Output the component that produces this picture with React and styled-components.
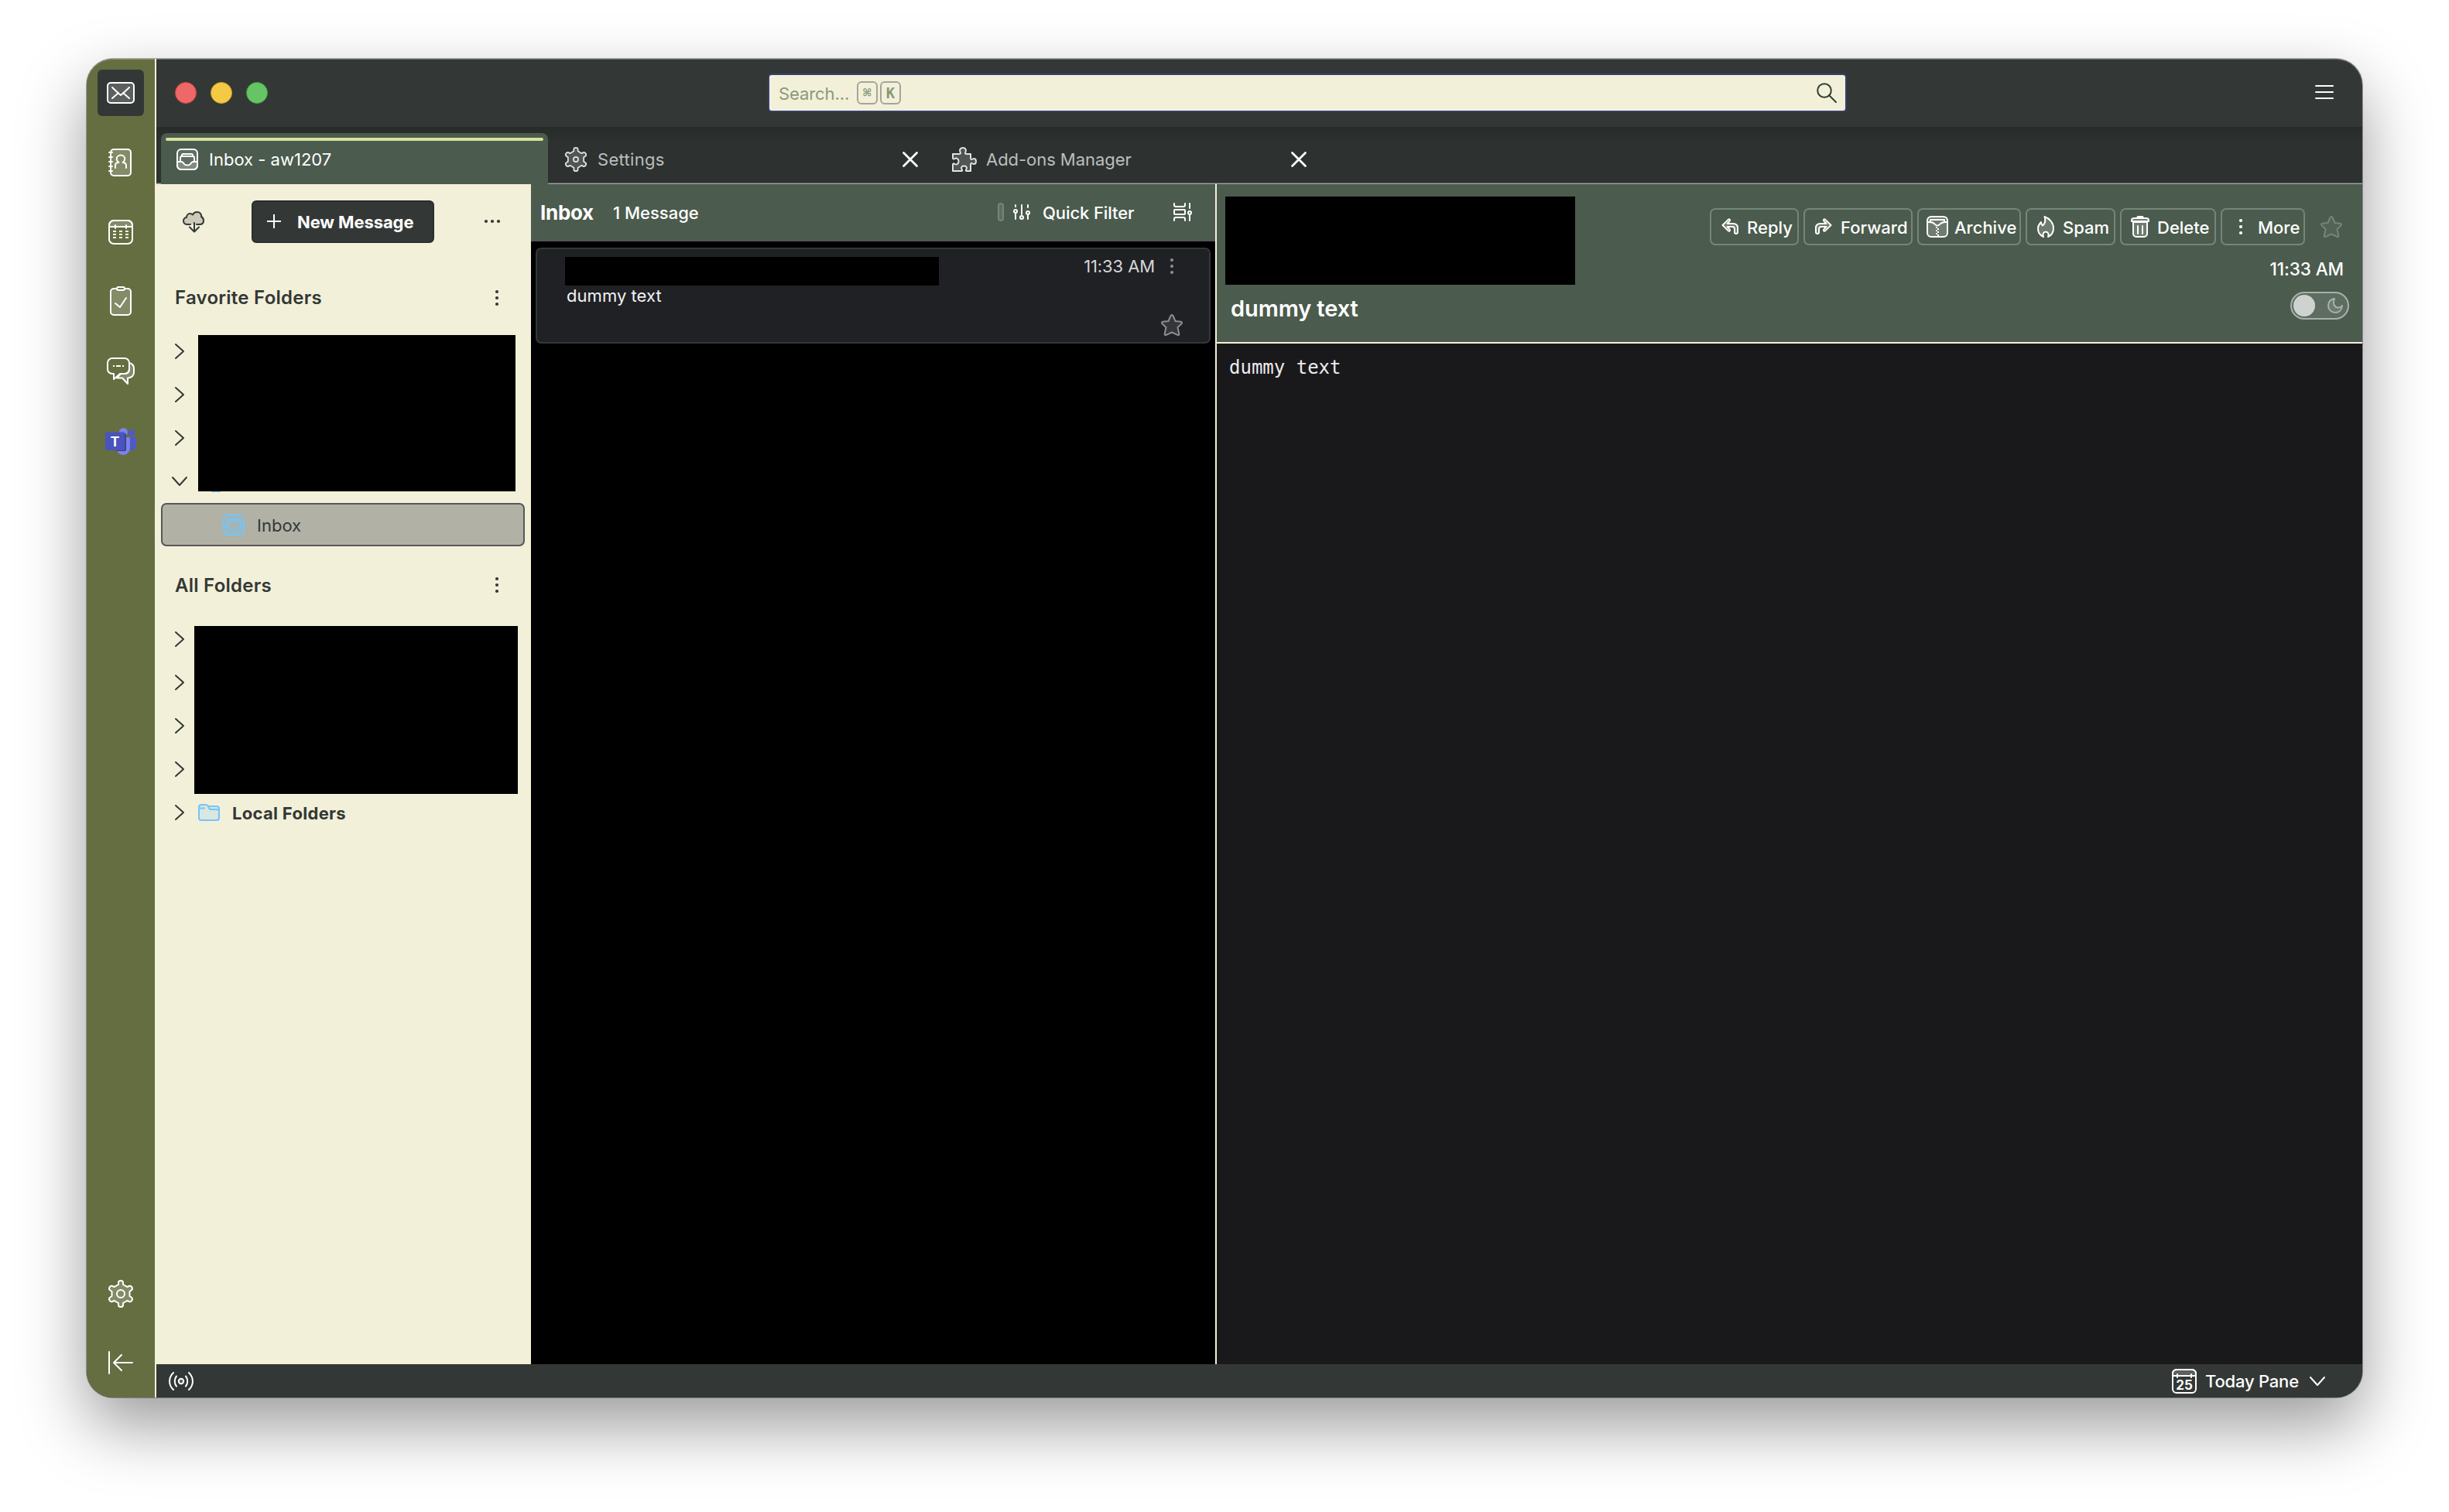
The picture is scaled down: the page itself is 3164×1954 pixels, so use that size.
import React from 'react';
import styled, { createGlobalStyle, ThemeProvider } from 'styled-components';

const theme = {
  colors: {
    chrome: '#333836',
    strip: '#2d3231',
    green: '#4b5b4d',
    olive: '#656e41',
    cream: '#f3f0d9',
    lime: '#d6e29e',
    blue: '#74c5f9',
    body: '#19191b'
  },
  font: 'Inter, "Liberation Sans", sans-serif'
};

const GlobalStyle = createGlobalStyle`
  body {
    margin: 0;
    background: #fff;
    overflow: hidden;
  }
`;

/* --- WINDOW --- */
const AppWindow = styled.div`
  position: relative; // anchor for the edge highlight
  box-sizing: border-box;
  display: flex;
  width: 2940px;
  height: 1730px;
  margin: 76px 112px 148px;
  overflow: hidden;
  border-radius: 34px;
  background: ${p => p.theme.colors.chrome};
  color: #fff;
  font-family: ${p => p.theme.font};
  font-size: 22px;
  line-height: 1.2;
  white-space: nowrap;

  &::after {
    content: '';
    position: absolute;
    inset: 0;
    border-radius: 34px;
    box-shadow: inset 0 1px 0 rgba(255, 255, 255, 0.28);
    pointer-events: none;
  }
`;

const Shadow = styled.div`
  display: flow-root;

  & > ${AppWindow} {
    box-shadow: 0 0 0 1px rgba(0, 0, 0, 0.3), 0 36px 86px rgba(0, 0, 0, 0.4);
  }
`;

const Main = styled.div`
  display: flex;
  flex: 1;
  flex-direction: column;
  min-width: 0;
`;

/* --- SPACES BAR --- */
const Spaces = styled.nav`
  box-sizing: border-box;
  display: flex;
  flex-direction: column;
  align-items: center;
  gap: 30px;
  width: 90px;
  padding: 14px 0;
  border-right: 2px solid ${p => p.theme.colors.cream};
  background: ${p => p.theme.colors.olive};
`;

const SpaceButton = styled.button`
  display: flex;
  align-items: center;
  justify-content: center;
  width: 60px;
  height: 60px;
  padding: 0;
  border: none;
  border-radius: 6px;
  background: ${p => (p.$active ? p.theme.colors.chrome : 'transparent')};
  color: #fff;
`;

const Spacer = styled.div`
  flex: 1;
`;

/* --- ICONS --- */
const Svg = styled.svg`
  display: block;
  flex: none;
  overflow: visible;
  fill: none;
  stroke: currentColor;
  stroke-width: 2;
  stroke-linecap: round;
  stroke-linejoin: round;
`;

const IconSlot = styled.span`
  display: flex;
  flex: none;
  align-items: center;
  justify-content: center;
  width: ${p => p.$w || 32}px;
  color: ${p => p.$color || 'inherit'};
`;

const tint = { fill: 'currentColor', fillOpacity: 0.2 };
const solid = { fill: 'currentColor', stroke: 'none' };

const MailIcon = () => (
  <Svg width="36" height="28" viewBox="0 0 36 28">
    <rect x="1" y="1" width="34" height="26" rx="4" {...tint} />
    <path d="M7 7l8 7.500 3 2.500 3-2.500L29 7M7 21l8-7M29 21l-8-7" />
  </Svg>
);

const AddressBookIcon = () => (
  <Svg width="32" height="36" viewBox="0 0 32 36">
    <rect x="3" y="1" width="26" height="34" rx="4" {...tint} />
    <path d="M1 5h4M1 11h4M1 17h4M1 23h4M1 29h4" />
    <path d="M9 25v-3c0-2.500 1.500-4 4.500-4-2.200-1.500-2.800-3-2.800-4.500 0-3 2.200-5 5.300-5s5.300 2 5.300 5c0 1.500-.6 3-2.800 4.500 3 0 4.500 1.500 4.500 4v3" />
  </Svg>
);

const CalendarIcon = () => (
  <Svg width="32" height="32" viewBox="0 0 32 32">
    <path d="M1 9V7a6 6 0 0 1 6-6h18a6 6 0 0 1 6 6v2z" {...tint} />
    <rect x="1" y="1" width="30" height="30" rx="6" />
    <path d="M9 7v4M23 7v4" />
    <path
      d="M6 15h4M14 15h4M22 15h4M6 19h4M14 19h4M22 19h4M6 23h4M14 23h4M22 23h4"
      strokeLinecap="butt"
    />
  </Svg>
);

const TasksIcon = () => (
  <Svg width="28" height="40" viewBox="0 0 28 40">
    <path
      d="M9 3H5a4 4 0 0 0-4 4v26a4 4 0 0 0 4 4h18a4 4 0 0 0 4-4V7a4 4 0 0 0-4-4h-4"
      {...tint}
    />
    <rect x="9" y="1" width="10" height="4" rx="2" />
    <path d="M7 22l6 5 8-12" />
  </Svg>
);

const ChatIcon = () => (
  <Svg width="36" height="36" viewBox="0 0 36 36">
    <path
      d="M29 7c4 1 6 3.500 6 7v5c0 4-2 7-8 7.500V34l-7-7.500h-7L18 21h5c4 0 6-2 6-6z"
      {...tint}
    />
    <path d="M7 1h16a6 6 0 0 1 6 6v8a6 6 0 0 1-6 6h-6l-8 7v-7H7a6 6 0 0 1-6-6V7a6 6 0 0 1 6-6z" />
    <path d="M8 11h2M12 11h6M20 11h2" strokeLinecap="butt" />
  </Svg>
);

const TeamsIcon = () => (
  <Svg width="40" height="34" viewBox="0 0 40 34">
    <g stroke="none">
      <circle cx="34" cy="6.500" r="4.200" fill="#5059c9" />
      <path d="M28 12h10.500a1.500 1.500 0 0 1 1.500 1.500V23a6 6 0 0 1-12 0z" fill="#5059c9" />
      <circle cx="23.500" cy="5.500" r="5.500" fill="#7b83eb" />
      <path d="M14 12h16.500a1.500 1.500 0 0 1 1.500 1.500V26a9 9 0 0 1-18 0z" fill="#7b83eb" />
      <path d="M14 7h11a2 2 0 0 1 2 2v19a2 2 0 0 1-2 2H14z" fill="#3a3f7c" />
      <rect y="5.500" width="25.500" height="23.500" rx="2" fill="#4b53bc" />
      <text
        x="12.500"
        y="23.500"
        textAnchor="middle"
        fontSize="18"
        fontWeight="700"
        fill="#fff"
      >
        T
      </text>
    </g>
  </Svg>
);

const GearIcon = ({ width = 34, height = 36, hole = 5 }) => (
  <Svg
    width={width}
    height={height}
    viewBox="0 0 34 36"
    preserveAspectRatio="none"
  >
    <path
      d="M14 6V3.500Q14 1 17 1t3 2.500V6l5.500 3.200 2.200-1.200q2.200-1 3.800 1.500 1.300 2.700-.8 4L28.500 15v6l2.200 1.500q2.100 1.300.8 4-1.600 2.500-3.800 1.500l-2.200-1.200L20 30v2.500q0 2.500-3 2.500t-3-2.500V30l-5.500-3.200L6.300 28q-2.200 1-3.800-1.500-1.300-2.700.8-4L5.500 21v-6l-2.200-1.500q-2.100-1.300-.8-4Q4.100 7 6.300 8l2.200 1.200z"
      {...tint}
    />
    <circle cx="17" cy="18" r={hole} />
  </Svg>
);

const CollapseIcon = () => (
  <Svg width="32" height="32" viewBox="0 0 32 32">
    <path d="M1 1v28M31 15H7M17 5L7 15l10 10" />
  </Svg>
);

const InboxIcon = () => (
  <Svg width="28" height="28" viewBox="0 0 28 28">
    <path
      d="M1 17h5c1.500 0 3 1 4 3 1.500 2 6.500 2 8 0 1-2 2.500-3 4-3h5v5a5 5 0 0 1-5 5H6a5 5 0 0 1-5-5z"
      {...tint}
    />
    <rect x="1" y="1" width="26" height="26" rx="5" {...tint} fillOpacity="0.12" />
    <path d="M5 16v-4a2 2 0 0 1 2-2h14a2 2 0 0 1 2 2v4M7 10V8.500A1.500 1.500 0 0 1 8.500 7h11A1.500 1.500 0 0 1 21 8.500V10" />
  </Svg>
);

const PuzzleIcon = () => (
  <Svg width="32" height="32" viewBox="0 0 32 32">
    <path
      d="M1 9h8c2 0 2.500-1 1.500-2.500C9 3.500 11 1 14 1s5 2.500 3.500 5.500C16.500 8 17 9 19 9h5v5c0 2 1 2.500 2.500 1.500 2.500-1.500 4.500 0 4.500 3s-2 4.500-4.500 3c-1.500-1-2.500-.5-2.500 1.500v8h-5c-1.500 0-1.500-1-.5-2.500C20 26 18 24.500 15.500 24.500s-4.500 1.500-3 4c1 1.500 1 2.500-.5 2.500H1v-8c0-2 1-2 2.500-1 2.500 1.500 5-.5 5-3.500s-2.500-5-5-3.500C2 16 1 15.500 1 14z"
      {...tint}
    />
  </Svg>
);

const CloseIcon = () => (
  <Svg width="20" height="20" viewBox="0 0 20 20">
    <path d="M1.500 1.500l17 17M18.500 1.500l-17 17" style={{ strokeWidth: 2.8 }} />
  </Svg>
);

const SearchIcon = () => (
  <Svg width="26" height="26" viewBox="0 0 26 26">
    <circle cx="10" cy="10" r="8.800" />
    <path d="M16 16l9 9" />
  </Svg>
);

const MenuIcon = () => (
  <Svg width="24" height="20" viewBox="0 0 24 20">
    <path d="M1 1h22M1 9h22M1 17h22" />
  </Svg>
);

const CloudIcon = () => (
  <Svg width="28" height="28" viewBox="0 0 28 28">
    <path
      d="M10 17H6c-3 0-5-2-5-4.500C1 9.500 3 8 5 8c0-3 2-5 4.500-5 1.500 0 2.500.5 3.500 1.500C14 2.500 16 1 18.500 1 22 1 24.500 3.500 24 7c2 1 3 2.800 3 5 0 3-2 5-5 5h-4"
      {...tint}
    />
    <path d="M15 15v11M9 20.500l6 6 6-6" />
  </Svg>
);

const PlusIcon = () => (
  <Svg width="18" height="20" viewBox="0 0 18 20">
    <path d="M9 0v18M0 9h18" strokeLinecap="butt" />
  </Svg>
);

const DotsIcon = ({ vertical }) => (
  <Svg
    width={vertical ? 4 : 20}
    height={vertical ? 20 : 6}
    viewBox={vertical ? '0 0 4 20' : '0 0 20 6'}
  >
    {[2, 10, 18].map(n => (
      <circle
        key={n}
        cx={vertical ? 2 : n}
        cy={vertical ? n : 2}
        r="2.100"
        {...solid}
      />
    ))}
  </Svg>
);

const ChevronIcon = ({ down }) =>
  down ? (
    <Svg width="20" height="12" viewBox="0 0 20 12">
      <path d="M1 1l9 10 9-10" />
    </Svg>
  ) : (
    <Svg width="12" height="20" viewBox="0 0 12 20">
      <path d="M1 1l10 9-10 9" />
    </Svg>
  );

const FolderIcon = () => (
  <Svg width="28" height="22" viewBox="0 0 28 22">
    <path
      d="M1 4a3 3 0 0 1 3-3h6c1.500 0 2.500 1 3 2h11a3 3 0 0 1 3 3v12a3 3 0 0 1-3 3H4a3 3 0 0 1-3-3z"
      {...tint}
    />
    <path d="M1 5.500h7M13 3c.5 2 1 4 3 4h8a3 3 0 0 1 3 2" />
  </Svg>
);

const AccountIcon = () => (
  <Svg width="28" height="28" viewBox="0 0 28 28">
    <path d="M1 10h26M18 27h10" />
  </Svg>
);

const SlidersIcon = () => (
  <Svg width="22" height="20" viewBox="0 0 22 20">
    <path d="M3 1v2M3 12v7M11 1v12M19 1v3M19 14v5" />
    <circle cx="3" cy="9" r="2" />
    <circle cx="11" cy="17" r="2" />
    <circle cx="19" cy="11" r="2" />
  </Svg>
);

const DisplayIcon = () => (
  <Svg width="24" height="24" viewBox="0 0 24 24">
    <path d="M1 1v2a2 2 0 0 0 2 2h10a2 2 0 0 0 2-2V1M1 23v-2a2 2 0 0 1 2-2h10a2 2 0 0 1 2 2v2" />
    <rect x="1" y="9" width="14" height="6" rx="1" />
    <path d="M21 1v6M21 16v7" />
    <circle cx="21" cy="13" r="2" />
  </Svg>
);

const StarIcon = () => (
  <Svg width="28" height="28" viewBox="0 0 28 28">
    <path
      d="M14 1c.8 0 1.300.6 1.700 1.500L18.500 9l7 .8c1.600.2 2 1.500.9 2.600L21.500 17l1.800 8.500c.2 1.300-.8 1.900-1.900 1.300L14 23.500l-7.400 3.300c-1.100.6-2.100 0-1.900-1.300L6.500 17l-4.900-4.600c-1.100-1.100-.7-2.400.9-2.600l7-.8 2.800-6.500C12.700 1.600 13.200 1 14 1z"
      {...tint}
    />
  </Svg>
);

const ReplyIcon = ({ flip }) => (
  <Svg
    width="22"
    height="22"
    viewBox="0 0 22 22"
    transform={flip ? 'scale(-1 1)' : undefined}
  >
    <path
      d="M1.500 9L9 1.600c1-1 2.800.4 1.800 1.700L7.500 7H15c4 0 6 2 6 5.500V18c0 2.500-4 2.500-4 0v-4c0-2-1-3-3-3H7.500l3.300 3.700c1 1.300-.8 2.700-1.800 1.700z"
      {...tint}
    />
  </Svg>
);

const ArchiveIcon = () => (
  <Svg width="28" height="28" viewBox="0 0 28 28">
    <rect x="1" y="1" width="26" height="26" rx="5" {...tint} />
    <path d="M1 8h3c3 0 5 .5 7 3 1.500 2 4.500 2 6 0 2-2.500 4-3 7-3h3M5 7V5h18v2" />
    <path d="M13 14v12" strokeDasharray="2 2" strokeLinecap="butt" />
    <path
      d="M15 14v12"
      strokeDasharray="2 2"
      strokeDashoffset="2"
      strokeLinecap="butt"
    />
  </Svg>
);

const SpamIcon = () => (
  <Svg width="22" height="28" viewBox="0 0 22 28">
    <path
      d="M8 27c-4.500-2-7-5.500-7-10.500C1 13 2.500 10.500 5 8c0 2 .6 3.500 2 4.500C10 10 11 5.500 9.500 1c7 2.500 11.500 8.500 11.500 15 0 5-2 9-7 11 1-2.500 1-6-3-6.500-4 .5-4 4-3 6.500z"
      {...tint}
    />
  </Svg>
);

const TrashIcon = () => (
  <Svg width="24" height="28" viewBox="0 0 24 28">
    <path d="M3 8h18v15a4 4 0 0 1-4 4H7a4 4 0 0 1-4-4z" {...tint} />
    <path d="M1 7V6a3 3 0 0 1 3-3h16a3 3 0 0 1 3 3v1z" {...tint} />
    <path d="M9 1.500h6" style={{ strokeWidth: 3 }} />
    <path d="M9 13v10M15 13v10" />
  </Svg>
);

const MoonIcon = () => (
  <Svg width="20" height="20" viewBox="0 0 20 20">
    <path
      d="M9 1C4 1.500 1 5.500 1 10c0 5 4 9 9 9 4.500 0 8.500-3 9-9-1.500 2-3 2.500-5 2.500-4.500 0-8-5-5-11.500z"
      {...tint}
    />
  </Svg>
);

const BroadcastIcon = () => (
  <Svg width="32" height="24" viewBox="0 0 32 24">
    <circle cx="16" cy="12" r="3.200" {...tint} />
    <path d="M10 5.500c-3 3.500-3 9.500 0 13M22 5.500c3 3.500 3 9.500 0 13M6 1c-6.600 6-6.600 16 0 22M26 1c6.600 6 6.600 16 0 22" />
  </Svg>
);

const TodayIcon = () => (
  <Svg width="32" height="32" viewBox="0 0 32 32">
    <path d="M1 9V6a5 5 0 0 1 5-5h20a5 5 0 0 1 5 5v3z" {...tint} />
    <rect x="1" y="1" width="30" height="30" rx="5" />
    <path d="M7 7v4M25 7v4" />
    <text
      x="16"
      y="26.500"
      textAnchor="middle"
      fontSize="17"
      fontWeight="700"
      {...solid}
    >
      25
    </text>
  </Svg>
);

/* --- TITLE BAR & TABS --- */
const TitleBar = styled.header`
  box-sizing: border-box;
  display: flex;
  align-items: center;
  height: 88px;
  padding: 0 37px 0 24px;
`;

const TrafficLight = styled.span`
  box-sizing: border-box;
  width: 28px;
  height: 28px;
  margin-right: 18px;
  border: 1px solid ${p => p.$edge};
  border-radius: 50%;
  background: ${p => p.$color};
`;

const SearchBar = styled.div`
  box-sizing: border-box;
  display: flex;
  align-items: center;
  width: 1394px;
  height: 50px;
  margin: 0 605px 0 628px;
  padding: 0 11px 0 12px;
  border: 2px solid #34406f;
  border-radius: 5px;
  background: ${p => p.theme.colors.cream};
  color: #8a9a7c;
`;

const Placeholder = styled.span`
  width: 101px;
  padding-top: 3px;
  letter-spacing: -0.1px;
`;

const Key = styled.kbd`
  box-sizing: border-box;
  width: 27px;
  height: 30px;
  margin-right: 3px;
  border: 2px solid #a5a49c;
  border-radius: 6px;
  font: 700 ${p => p.$size || 19}px / 26px "DejaVu Sans Mono", monospace;
  text-align: center;
`;

const TabStrip = styled.div`
  box-sizing: border-box;
  display: flex;
  gap: 2px;
  height: 74px;
  padding: 8px 6px 0;
  background: linear-gradient(#272b2a, ${p => p.theme.colors.strip} 20px);
  box-shadow: inset 0 -1px #a5a7a6, inset 0 -2px #58595c;
`;

const TabBox = styled.div`
  position: relative; // anchor for the selection line
  box-sizing: border-box;
  display: flex;
  align-items: center;
  gap: 12px;
  width: 500px;
  height: 66px;
  padding: 2px 24px 0 18px;
  border-radius: 8px 8px 0 0;
  background: ${p => (p.$active ? p.theme.colors.green : 'transparent')};
  color: ${p => (p.$active ? '#fff' : '#bcbebd')};

  &::before {
    content: '';
    display: ${p => (p.$active ? 'block' : 'none')};
    position: absolute;
    top: 6px;
    left: 6px;
    right: 6px;
    height: 4px;
    border-radius: 2px;
    background: ${p => p.theme.colors.lime};
  }
`;

const Label = styled.span`
  letter-spacing: ${p => p.$spacing || 0}px;
`;

const Tab = ({ icon, label, active, spacing }) => (
  <TabBox $active={active}>
    <IconSlot $color={active ? '#fff' : '#e2e3e2'}>{icon}</IconSlot>
    <Label $spacing={spacing}>{label}</Label>
    <Spacer />
    {!active && (
      <IconSlot $w={20} $color="#fff">
        <CloseIcon />
      </IconSlot>
    )}
  </TabBox>
);

/* --- PANES --- */
const Panes = styled.div`
  display: flex;
  flex: 1;
  min-height: 0;
`;

const FolderPane = styled.aside`
  width: 484px;
  background: ${p => p.theme.colors.cream};
  color: ${p => p.theme.colors.chrome};
`;

const FolderToolbar = styled.div`
  box-sizing: border-box;
  display: flex;
  align-items: center;
  height: 97px;
  padding: 0 40px 0 34px;
`;

const NewMessage = styled.button`
  box-sizing: border-box;
  display: flex;
  align-items: center;
  gap: 21px;
  width: 236px;
  height: 55px;
  margin: 0 auto 0 61px;
  padding: 0 0 0 18px;
  border: 2px solid #292f2e;
  border-radius: 6px;
  background: ${p => p.theme.colors.chrome};
  color: #fff;
  font: 700 22px ${p => p.theme.font};
  letter-spacing: -0.1px;
`;

const SectionTitle = styled.div`
  box-sizing: border-box;
  display: flex;
  align-items: center;
  justify-content: space-between;
  height: ${p => p.$height}px;
  padding: 8px 42px 0 24px;
  font-size: 24px;
  font-weight: 600;
  letter-spacing: 0.25px;
`;

const SectionName = styled.span`
  padding-top: 2px;
`;

const FolderList = styled.div`
  position: relative; // anchor for the redaction
  padding: 0 8px 0 6px;
`;

const FolderRow = styled.div`
  box-sizing: border-box;
  display: flex;
  align-items: center;
  height: 56px;
  padding-left: ${p => (p.$selected ? 78 : 12)}px;
  border: 2px solid ${p => (p.$selected ? '#57565b' : 'transparent')};
  border-radius: 7px;
  background: ${p => (p.$selected ? '#b1b1a5' : 'transparent')};
`;

const FolderGlyph = styled.span`
  margin-left: ${p => (p.$nested ? 0 : 14)}px;
  color: ${p => p.theme.colors.blue};
`;

const FolderName = styled.span`
  margin-left: 16px;
  padding-top: 2px;
  font-weight: ${p => (p.$bold ? 700 : 400)};
  letter-spacing: ${p => (p.$bold ? 0.3 : 0)}px;
`;

const Redaction = styled.div`
  position: absolute;
  top: ${p => p.$top}px;
  left: ${p => p.$left}px;
  width: ${p => p.$w}px;
  height: ${p => p.$h}px;
  background: #000;
`;

const ListPane = styled.section`
  width: 884px;
  border-right: 2px solid ${p => p.theme.colors.cream};
  background: #000;
`;

const ListHeader = styled.div`
  box-sizing: border-box;
  display: flex;
  align-items: center;
  height: 74px;
  padding: 0 30px 0 12px;
  border-bottom: 2px solid #545258;
  background: ${p => p.theme.colors.green};
  font-weight: 500;
`;

const ListTitle = styled.h2`
  width: 94px;
  margin: 0;
  padding-top: 2px;
  font-size: 26px;
  font-weight: 700;
  letter-spacing: -0.3px;
`;

const MessageCount = styled.span`
  padding-top: 2px;
`;

const FilterPill = styled.span`
  box-sizing: border-box;
  width: 8px;
  height: 24px;
  margin-right: 12px;
  border: 2px solid #76857a;
  border-radius: 4px;
  background: #5f6e62;
`;

const FilterLabel = styled.span`
  width: 169px;
  margin-left: 16px;
  padding-top: 2px;
  letter-spacing: -0.1px;
`;

const Card = styled.article`
  box-sizing: border-box;
  display: flex;
  justify-content: space-between;
  height: 124px;
  margin: 8px 6px;
  padding: 10px 34px 8px 36px;
  border: 2px solid #313837;
  border-radius: 7px;
  background: #202124;
`;

const CardText = styled.div`
  color: #f1f1f2;
`;

const Sender = styled.div`
  width: 483px;
  height: 37px;
  background: #000;
`;

const CardSubject = styled.div`
  padding-left: 2px;
  letter-spacing: 0.05px;
`;

const CardMeta = styled.div`
  display: flex;
  flex-direction: column;
  align-items: flex-end;
  justify-content: space-between;
  color: #8e8e91;
`;

const CardTime = styled.div`
  display: flex;
  align-items: center;
  gap: 20px;
  height: 24px;
  padding-right: 12px;

  & > time {
    color: #d6d6d7;
    letter-spacing: -0.1px;
  }
`;

const MessagePane = styled.section`
  display: flex;
  flex: 1;
  flex-direction: column;
  background: ${p => p.theme.colors.body};
`;

const MessageHeader = styled.div`
  box-sizing: border-box;
  display: flex;
  justify-content: space-between;
  height: 206px;
  padding: 16px 17px 0 11px;
  border-bottom: 2px solid ${p => p.theme.colors.cream};
  background: ${p => p.theme.colors.green};
`;

const MessageFrom = styled.div`
  width: 452px;
  height: 114px;
  background: #000;
`;

const Subject = styled.h1`
  margin: 14px 0 0 7px;
  font-size: 29px;
  font-weight: 600;
  letter-spacing: -0.1px;
`;

const HeaderSide = styled.div`
  display: flex;
  flex-direction: column;
  align-items: flex-end;
  padding-top: 15px;
  font-weight: 500;
`;

const Actions = styled.div`
  display: flex;
  align-items: center;
  gap: 6px;
  margin-right: 9px;
`;

const ActionButton = styled.button`
  box-sizing: border-box;
  display: flex;
  align-items: center;
  gap: 6px;
  width: ${p => p.$w}px;
  height: 48px;
  padding: 0 0 0 8px;
  border: 2px solid #76857a;
  border-radius: 7px;
  background: none;
  color: #fff;
  font: 500 22px / 26px ${p => p.theme.font};
`;

const ActionLabel = styled.span`
  padding-top: 2px;
`;

const HeaderStar = styled.span`
  margin-left: 14px;
  color: #76857a;
`;

const HeaderTime = styled.time`
  height: 28px;
  margin: 17px 7px 1px 0;
  font-size: 22.5px;
  letter-spacing: -0.1px;
`;

const DarkToggle = styled.div`
  box-sizing: border-box;
  display: flex;
  align-items: center;
  justify-content: space-between;
  width: 76px;
  height: 36px;
  margin-top: 14px;
  padding: 0 6px 0 2px;
  border: 2px solid #a8b2a9;
  border-radius: 18px;
  background: #5d6d62;
  color: #a8b2a9;
`;

const Knob = styled.span`
  width: 28px;
  height: 28px;
  border-radius: 50%;
  background: #cfd3cf;
`;

const MessageBody = styled.pre`
  margin: 16px;
  color: #ececee;
  font: 24px / 30px "DejaVu Sans Mono", monospace;
`;

/* --- STATUS BAR --- */
const StatusBar = styled.footer`
  box-sizing: border-box;
  display: flex;
  align-items: center;
  height: 43px;
  padding: 1px 48px 0 16px;
  background: ${p => p.theme.colors.chrome};
`;

const TodayLabel = styled.span`
  width: 135px;
  margin-left: 11px;
  font-weight: 500;
  letter-spacing: -0.2px;
`;

const actions = [
  { label: 'Reply', icon: <ReplyIcon />, width: 115 },
  { label: 'Forward', icon: <ReplyIcon flip />, width: 141 },
  { label: 'Archive', icon: <ArchiveIcon />, width: 134 },
  { label: 'Spam', icon: <SpamIcon />, width: 116 },
  { label: 'Delete', icon: <TrashIcon />, width: 124 },
  { label: 'More', icon: <DotsIcon vertical />, width: 109 }
];

const Twisty = ({ down }) => (
  <IconSlot $w={20}>
    <ChevronIcon down={down} />
  </IconSlot>
);

const App = () => (
  <ThemeProvider theme={theme}>
    <GlobalStyle />
    <Shadow>
      <AppWindow>
        <Spaces>
          <SpaceButton $active>
            <MailIcon />
          </SpaceButton>
          <SpaceButton>
            <AddressBookIcon />
          </SpaceButton>
          <SpaceButton>
            <CalendarIcon />
          </SpaceButton>
          <SpaceButton>
            <TasksIcon />
          </SpaceButton>
          <SpaceButton>
            <ChatIcon />
          </SpaceButton>
          <SpaceButton>
            <TeamsIcon />
          </SpaceButton>
          <Spacer />
          <SpaceButton>
            <GearIcon />
          </SpaceButton>
          <SpaceButton>
            <CollapseIcon />
          </SpaceButton>
        </Spaces>

        <Main>
          <TitleBar>
            <TrafficLight $color="#ed6866" $edge="#d9443f" />
            <TrafficLight $color="#f4c944" $edge="#d6a32a" />
            <TrafficLight $color="#67c466" $edge="#3fa33c" />
            <SearchBar>
              <Placeholder>Search...</Placeholder>
              <Key $size={18}>⌘</Key>
              <Key>K</Key>
              <Spacer />
              <IconSlot $w={26} $color="#2d4030">
                <SearchIcon />
              </IconSlot>
            </SearchBar>
            <MenuIcon />
          </TitleBar>

          <TabStrip>
            <Tab active icon={<InboxIcon />} label="Inbox - aw1207" />
            <Tab
              icon={<GearIcon width={30} height={32} hole={3.5} />}
              label="Settings"
              spacing={0.3}
            />
            <Tab icon={<PuzzleIcon />} label="Add-ons Manager" spacing={-0.05} />
          </TabStrip>

          <Panes>
            <FolderPane>
              <FolderToolbar>
                <CloudIcon />
                <NewMessage>
                  <PlusIcon />
                  New Message
                </NewMessage>
                <DotsIcon />
              </FolderToolbar>

              <SectionTitle $height={91}>
                <SectionName>Favorite Folders</SectionName>
                <DotsIcon vertical />
              </SectionTitle>
              <FolderList>
                <FolderRow>
                  <Twisty />
                </FolderRow>
                <FolderRow>
                  <Twisty />
                </FolderRow>
                <FolderRow>
                  <Twisty />
                </FolderRow>
                <FolderRow>
                  <Twisty down />
                  <FolderGlyph>
                    <AccountIcon />
                  </FolderGlyph>
                </FolderRow>
                <FolderRow $selected>
                  <FolderGlyph $nested>
                    <InboxIcon />
                  </FolderGlyph>
                  <FolderName>Inbox</FolderName>
                </FolderRow>
                <Redaction $top={7} $left={54} $w={410} $h={202} />
              </FolderList>

              <SectionTitle $height={92}>
                <SectionName>All Folders</SectionName>
                <DotsIcon vertical />
              </SectionTitle>
              <FolderList>
                <FolderRow>
                  <Twisty />
                </FolderRow>
                <FolderRow>
                  <Twisty />
                </FolderRow>
                <FolderRow>
                  <Twisty />
                </FolderRow>
                <FolderRow>
                  <Twisty />
                </FolderRow>
                <FolderRow>
                  <Twisty />
                  <FolderGlyph>
                    <FolderIcon />
                  </FolderGlyph>
                  <FolderName $bold>Local Folders</FolderName>
                </FolderRow>
                <Redaction $top={11} $left={49} $w={418} $h={217} />
              </FolderList>
            </FolderPane>

            <ListPane>
              <ListHeader>
                <ListTitle>Inbox</ListTitle>
                <MessageCount>1 Message</MessageCount>
                <Spacer />
                <FilterPill />
                <SlidersIcon />
                <FilterLabel>Quick Filter</FilterLabel>
                <DisplayIcon />
              </ListHeader>
              <Card>
                <CardText>
                  <Sender />
                  <CardSubject>dummy text</CardSubject>
                </CardText>
                <CardMeta>
                  <CardTime>
                    <time>11:33 AM</time>
                    <DotsIcon vertical />
                  </CardTime>
                  <StarIcon />
                </CardMeta>
              </Card>
            </ListPane>

            <MessagePane>
              <MessageHeader>
                <div>
                  <MessageFrom />
                  <Subject>dummy text</Subject>
                </div>
                <HeaderSide>
                  <Actions>
                    {actions.map(a => (
                      <ActionButton key={a.label} $w={a.width}>
                        <IconSlot>{a.icon}</IconSlot>
                        <ActionLabel>{a.label}</ActionLabel>
                      </ActionButton>
                    ))}
                    <HeaderStar>
                      <StarIcon />
                    </HeaderStar>
                  </Actions>
                  <HeaderTime>11:33 AM</HeaderTime>
                  <DarkToggle>
                    <Knob />
                    <MoonIcon />
                  </DarkToggle>
                </HeaderSide>
              </MessageHeader>
              <MessageBody>dummy text</MessageBody>
            </MessagePane>
          </Panes>

          <StatusBar>
            <BroadcastIcon />
            <Spacer />
            <TodayIcon />
            <TodayLabel>Today Pane</TodayLabel>
            <ChevronIcon down />
          </StatusBar>
        </Main>
      </AppWindow>
    </Shadow>
  </ThemeProvider>
);

export default App;
